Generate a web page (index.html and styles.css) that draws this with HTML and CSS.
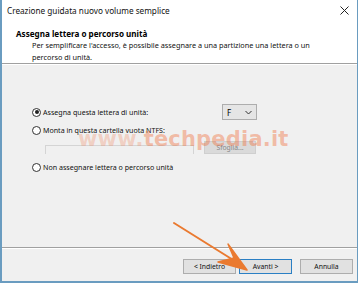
FILE: index.html
```html
<!DOCTYPE html>
<html lang="it">
<head>
<meta charset="utf-8">
<title>Creazione guidata nuovo volume semplice</title>
<link rel="stylesheet" href="styles.css">
</head>
<body>
<div class="window">
  <div class="titlebar">
    <span class="title">Creazione guidata nuovo volume semplice</span>
    <span class="close">
      <svg width="9" height="9" viewBox="0 0 9 9"><path d="M0.5 0.5L8.5 8.5M8.5 0.5L0.5 8.5" stroke="#222" stroke-width="1"/></svg>
    </span>
  </div>
  <div class="header">
    <div class="h-title">Assegna lettera o percorso unità</div>
    <div class="h-sub">Per semplificare l'accesso, è possibile assegnare a una partizione una lettera o un<br>percorso di unità.</div>
  </div>
  <div class="content">
    <div class="row row1">
      <label class="radio"><span class="dot checked"></span>Assegna questa lettera di unità:</label>
      <div class="combo"><span>F</span>
        <svg width="7" height="5" viewBox="0 0 7 5"><path d="M0.5 1L3.5 4L6.5 1" fill="none" stroke="#333" stroke-width="1"/></svg>
      </div>
    </div>
    <div class="row row2">
      <label class="radio"><span class="dot"></span>Monta in questa cartella vuota NTFS:</label>
    </div>
    <div class="row row-field">
      <div class="field"></div>
      <div class="btn small disabled">Sfoglia...</div>
    </div>
    <div class="row row3">
      <label class="radio"><span class="dot"></span>Non assegnare lettera o percorso unità</label>
    </div>
  </div>
  <div class="footer">
    <div class="btn">&lt; Indietro</div>
    <div class="btn focus">Avanti &gt;</div>
    <div class="btn cancel">Annulla</div>
  </div>
  <div class="watermark"><span class="www">www.</span>techpedia.it</div>
  <svg class="arrow" width="360" height="283" viewBox="0 0 360 283">
    <path d="M174 223 L238 263" stroke="#ea7a30" stroke-width="2" stroke-linecap="round"/>
    <path d="M247 270 L228 244 L234 258 L218 262 Z" fill="#ea7a30" stroke="#ea7a30" stroke-width="1.5" stroke-linejoin="round"/>
  </svg>
</div>
</body>
</html>
```
FILE: styles.css
```css
* { box-sizing: border-box; }
html, body { margin: 0; padding: 0; }
body {
  width: 360px;
  height: 283px;
  overflow: hidden;
  font-family: "Noto Sans", "Liberation Sans", sans-serif;
  color: #000;
  background: #fff;
}
.window {
  position: relative;
  width: 358px;
  height: 283px;
  border-left: 2px solid #6a9cc0;
  border-right: 1px solid #6a9cc0;
  border-bottom: 2px solid #6a9cc0;
  background: #f0f0f0;
  display: flex;
  flex-direction: column;
}
.titlebar {
  height: 23px;
  background: #fff;
  display: flex;
  align-items: center;
  justify-content: space-between;
  padding: 0 6px 2px 5px;
}
.title { font-size: 8.2px; color: #111; }
.close { display: flex; padding-right: 2px; }
.header {
  height: 41px;
  background: #fff;
  border-bottom: 1px solid #a0a0a0;
  padding: 6px 0 0 14px;
}
.h-title { font-size: 8.1px; font-weight: bold; line-height: 10px; }
.h-sub { font-size: 7.3px; line-height: 12px; padding-left: 16px; color: #111; }
.content {
  flex: 1;
  border-top: 1px solid #fff;
  border-bottom: 1px solid #a0a0a0;
  padding: 38px 0 0 30px;
  display: flex;
  flex-direction: column;
}
.row { display: flex; align-items: center; }
.row1 { height: 18px; }
.row2 { height: 18px; }
.row-field { height: 14px; padding-left: 13px; margin-top: 1px; }
.row3 { height: 18px; margin-top: 4px; }
.radio {
  display: flex;
  align-items: center;
  font-size: 7.1px;
  color: #111;
  width: 190px;
}
.dot {
  width: 9px;
  height: 9px;
  border: 1px solid #333;
  border-radius: 50%;
  background: #fff;
  margin-right: 2px;
  position: relative;
}
.dot.checked::after {
  content: "";
  position: absolute;
  left: 1.5px; top: 1.5px;
  width: 4px; height: 4px;
  border-radius: 50%;
  background: #222;
}
.combo {
  width: 35px;
  height: 16px;
  border: 1px solid #adadad;
  background: #e5e5e5;
  display: flex;
  align-items: center;
  justify-content: space-between;
  padding: 0 4px 0 4px;
  font-size: 8px;
}
.field {
  width: 149px;
  height: 9px;
  border: 1px solid #d4d4d4;
  border-bottom: none;
  background: #f0f0f0;
  align-self: flex-end;
}
.btn {
  width: 53px;
  height: 15px;
  border: 1px solid #adadad;
  background: #e1e1e1;
  font-size: 6.8px;
  display: flex;
  align-items: center;
  justify-content: center;
  color: #111;
}
.btn.small { margin-left: 10px; width: 52px; height: 13px; }
.btn.disabled { color: #888; background: #dadada; border-color: #cfcfcf; }
.btn.focus { border: 1.5px solid #2a7fc4; margin-left: 3px; }
.btn.cancel { margin-left: 8px; }
.footer {
  height: 33px;
  border-top: 1px solid #fff;
  display: flex;
  align-items: flex-start;
  padding: 10px 0 0 181px;
}
.watermark {
  position: absolute;
  left: 76px;
  top: 127px;
  font-family: "DejaVu Sans", sans-serif;
  font-weight: bold;
  font-size: 21px;
  letter-spacing: 0.2px;
  color: rgba(240, 110, 60, 0.42);
  pointer-events: none;
}
.watermark .www { color: rgba(240, 140, 100, 0.32); }
.arrow {
  position: absolute;
  left: -2px;
  top: 0;
  pointer-events: none;
}
```
